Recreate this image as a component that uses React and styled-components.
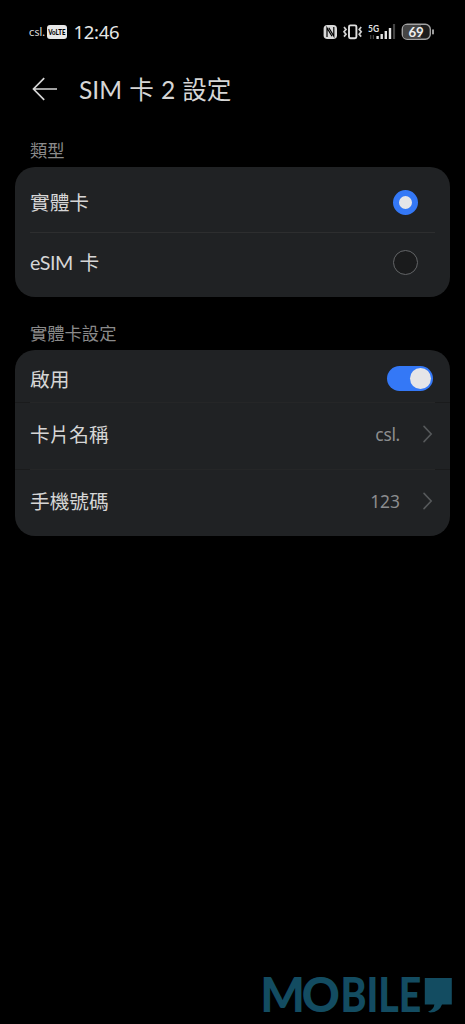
import React from 'react';
import styled, { createGlobalStyle } from 'styled-components';

const App = () => {
    return (
        <Screen>
            <GlobalStyle />
            <StatusBar>
                <Carrier>csl.</Carrier>
                <VolteBadge />
                <Clock>12:46</Clock>
                <StatusIcons />
            </StatusBar>
            <Header>
                <BackIcon />
                <Title><Latin $gap="0">SIM</Latin> 卡 <Latin>2</Latin> 設定</Title>
            </Header>
            <SectionLabel $height="53px">類型</SectionLabel>
            <Card>
                <Row $height="65px" $pad="5px 17px 0 15px">
                    <Label>實體卡</Label>
                    <Radio $checked />
                </Row>
                <Divider $color="#2d2e2f" />
                <Row $height="64px" $pad="0 17px 6px 15px">
                    <Label><Latin $gap="-0.4px">eSIM</Latin> 卡</Label>
                    <Radio />
                </Row>
            </Card>
            <SectionLabel $height="53px">實體卡設定</SectionLabel>
            <Card>
                <Row $height="52px" $pad="5px 17px 0 15px">
                    <Label>啟用</Label>
                    <Switch><Knob /></Switch>
                </Row>
                <Divider $color="#252627" $edge="#1a1b1c" />
                <Row $height="66px" $pad="0 17px 5px 15px">
                    <Label>卡片名稱</Label>
                    <Value $gap="-0.3px">csl.</Value>
                    <Chevron />
                </Row>
                <Divider $color="#252627" $edge="#1a1b1c" />
                <Row $height="66px" $pad="0 17px 5px 15px">
                    <Label>手機號碼</Label>
                    <Value>123</Value>
                    <Chevron />
                </Row>
            </Card>
            <Footer>
                <Logo />
            </Footer>
        </Screen>
    );
};

const VolteBadge = () => (
    <Volte width="20" height="14" viewBox="0 0 20 14">
        <rect width="20" height="14" rx="3" fill="#e8e8e8" />
        <text x="1.3" y="9.8" fontSize="7.4" fontWeight="900" textLength="17.2" lengthAdjust="spacingAndGlyphs">VoLTE</text>
    </Volte>
);

const StatusIcons = () => (
    <Icons width="114" height="22" viewBox="321 21 114 22">
        {/* nfc */}
        <rect x="323.6" y="25" width="13.4" height="14" rx="3.8" fill="#d9d9d9" />
        <path d="M327 37V28L332 36.2M328.8 27.8L333.8 36V27" fill="none" stroke="#000" strokeWidth="1.2" />
        {/* vibrate */}
        <rect x="349" y="25.4" width="7.4" height="12.8" rx="1.4" fill="none" stroke="#dedede" strokeWidth="1.9" />
        <path d="M344 27L346 29.4L344 31.8L346 34.2L344 36.6M361.2 27L359.2 29.4L361.2 31.8L359.2 34.2L361.2 36.6" fill="none" stroke="#d0d0d0" strokeWidth="1.7" />
        {/* signal */}
        <text x="368" y="31.6" fontSize="9.5" fontWeight="700" textLength="11" lengthAdjust="spacingAndGlyphs" fill="#e4e4e4">5G</text>
        <path d="M370.7 35V39M373.4 35V39" stroke="#444" strokeWidth="1.2" />
        <path d="M377.6 36V39M381.7 34V39M385.8 31V39M390 28V39" stroke="#e4e4e4" strokeWidth="2.4" />
        <path d="M394 24V39" stroke="#444" strokeWidth="2.2" />
        {/* battery */}
        <rect x="402.3" y="24.3" width="28" height="15" rx="5" fill="#1c1c1c" stroke="#a2a2a2" strokeWidth="1.4" />
        <path d="M406 25H421V38.6H406Q403 38.6 403 35V29Q403 25 406 25Z" fill="#454545" />
        <path d="M433 30V33.8" stroke="#c4c4c4" strokeWidth="1.6" strokeLinecap="round" />
        <text x="408.4" y="36.7" fontSize="13.5" fontWeight="700" textLength="15.4" lengthAdjust="spacingAndGlyphs" fill="#f0f0f0">69</text>
    </Icons>
);

const BackIcon = () => (
    <svg width="26" height="24" viewBox="0 0 26 24" fill="none" stroke="#d6d6d6" strokeWidth="1.7">
        <path d="M1.5 12H25M12.2 1.2L1.5 12L12.2 22.8" />
    </svg>
);

const Chevron = () => (
    <ChevronSvg width="11" height="18" viewBox="0 0 11 18" fill="none" stroke="#55585a" strokeWidth="1.6">
        <path d="M2 1.4L9.2 9L2 16.6" strokeLinecap="round" />
    </ChevronSvg>
);

const Logo = () => (
    <svg width="196" height="60" viewBox="257 964 196 60" fill="#134c61">
        <LogoText y="1012">
            <tspan x="260.3 301.8">MO</tspan>
        </LogoText>
        <LogoText x="340.4" y="1012" textLength="81" lengthAdjust="spacingAndGlyphs">BILE</LogoText>
        <path d="M424.8 978H451.8V1004.4H442Q439.5 1011.8 430 1012.6L428 1011.6Q433.8 1009.5 434.4 1004.4H424.8Z" />
    </svg>
);

const GlobalStyle = createGlobalStyle`
    *{
        box-sizing: border-box;
    }
    body{
        margin: 0;
        background: #000;
    }
    svg{
        display: block;
        flex: none;
    }
`;

const Screen = styled.div`
    display: flex;
    flex-direction: column;
    width: 465px;
    height: 1024px;
    overflow: hidden;
    background: #000;
    color: #d6d6d6;
    font-family: "Noto Sans CJK TC", sans-serif;
`;

const StatusBar = styled.div`
    display: flex;
    align-items: center;
    height: 64px;
    padding: 0 30px 0 29px;
    font-family: Lato, sans-serif;
`;

const Carrier = styled.span`
    width: 18px;
    font-size: 11.5px;
    line-height: 16px;
    color: #d8d8d8;
`;

const Volte = styled.svg`
    font-family: Lato, sans-serif;
`;

const Clock = styled.span`
    margin-left: 6.5px;
    font-family: "Noto Sans", sans-serif;
    font-size: 18.5px;
    line-height: 24px;
    letter-spacing: -0.3px;
    color: #e6e6e6;
`;

const Icons = styled.svg`
    margin-left: auto;
    font-family: Lato, sans-serif;
`;

const Header = styled.header`
    display: flex;
    align-items: center;
    gap: 21px;
    height: 50px;
    padding-left: 32px;
`;

const Title = styled.h1`
    margin: 0;
    font-size: 24.6px;
    font-weight: 400;
    line-height: 36px;
    word-spacing: 1.6px;
    white-space: nowrap;
`;

const Latin = styled.span`
    font-family: Lato, sans-serif;
    letter-spacing: ${({ $gap }) => $gap || '0'};
`;

const SectionLabel = styled.h2`
    display: flex;
    align-items: flex-end;
    height: ${({ $height }) => $height};
    margin: 0;
    padding: 0 0 5px 30px;
    color: #8a8a8a;
    font-size: 17.3px;
    font-weight: 400;
    line-height: 24px;
`;

const Card = styled.section`
    margin: 0 15px;
    border-radius: 20px;
    background: #202224;
    overflow: hidden;
`;

const Row = styled.div`
    display: flex;
    align-items: center;
    height: ${({ $height }) => $height};
    padding: ${({ $pad }) => $pad};
`;

const Label = styled.span`
    flex: 1;
    font-size: 19.7px;
    line-height: 28px;
    word-spacing: 2px;
`;

const Radio = styled.span`
    width: 25px;
    height: 25px;
    margin-right: 15px;
    border: ${({ $checked }) => ($checked ? '6px solid #3478f6' : '1.4px solid #636567')};
    border-radius: 50%;
    background: ${({ $checked }) => ($checked ? '#e5e5e8' : '#1a1b1c')};
`;

const Divider = styled.div`
    height: 1px;
    padding: 0 15px;
    background: ${({ $edge }) => $edge || 'transparent'};

    &::before{
        content: "";
        display: block;
        height: 1px;
        background: ${({ $color }) => $color};
    }
`;

const Switch = styled.span`
    display: flex;
    align-items: center;
    justify-content: flex-end;
    width: 46px;
    height: 25px;
    padding-right: 2px;
    border-radius: 13px;
    background: #3478f6;
`;

const Knob = styled.span`
    width: 21px;
    height: 21px;
    border-radius: 50%;
    background: #e5e5e8;
`;

const Value = styled.span`
    color: #8c8d8f;
    font-family: "Noto Sans", sans-serif;
    font-size: 17.4px;
    line-height: 26px;
    letter-spacing: ${({ $gap }) => $gap || '0'};
`;

const ChevronSvg = styled.svg`
    margin-left: 22px;
`;

const Footer = styled.footer`
    display: flex;
    justify-content: flex-end;
    margin-top: auto;
    padding-right: 12px;
`;

const LogoText = styled.text`
    font-family: Lato, sans-serif;
    font-size: 47px;
    font-weight: 900;
`;

export default App;
